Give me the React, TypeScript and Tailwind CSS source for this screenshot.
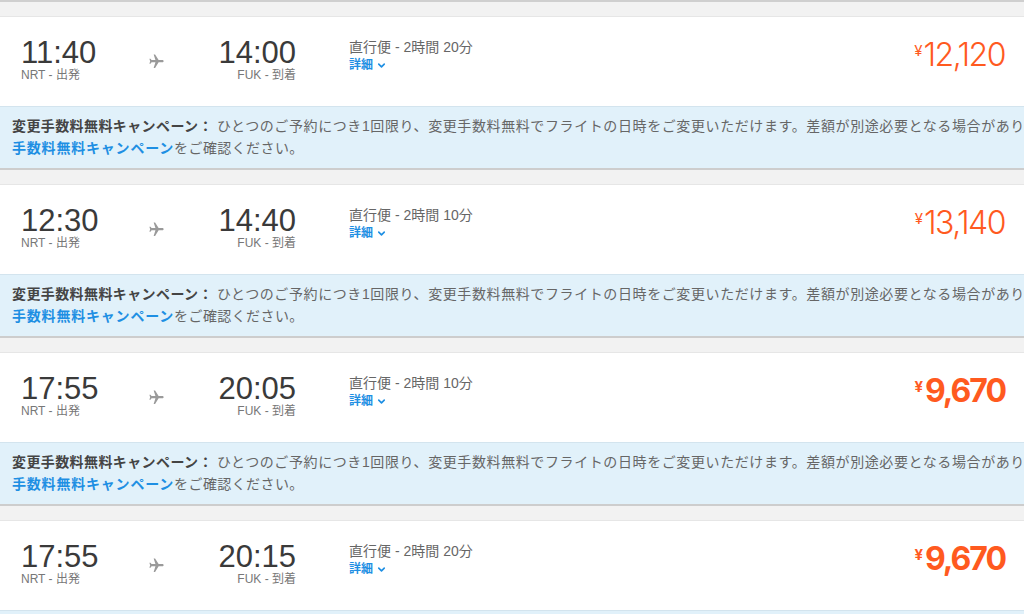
import { ChevronDown } from "lucide-react";

type Flight = {
	dep: string;
	arr: string;
	duration: string;
	price: string;
	cheap?: boolean;
};

const flights: Flight[] = [
	{ dep: "11:40", arr: "14:00", duration: "2時間 20分", price: "12,120" },
	{ dep: "12:30", arr: "14:40", duration: "2時間 10分", price: "13,140" },
	{ dep: "17:55", arr: "20:05", duration: "2時間 10分", price: "9,670", cheap: true },
	{ dep: "17:55", arr: "20:15", duration: "2時間 20分", price: "9,670", cheap: true },
];

function PlaneIcon() {
	return (
		<svg width="17" height="17" viewBox="0 0 24 24" className="rotate-90 fill-[#9a9a9a]">
			<path d="M21 16v-2l-8-5V3.5c0-.83-.67-1.5-1.5-1.5S10 2.67 10 3.5V9l-8 5v2l8-2.5V19l-2 1.5V22l3.5-1 3.5 1v-1.5L13 19v-5.5l8 2.5z" />
		</svg>
	);
}

function FlightCard({ flight }: { flight: Flight }) {
	return (
		<div className="border-t border-[#e6e6e6]">
			{/* Main row */}
			<div className="h-[89px] bg-white flex items-start pl-[21px] pr-[19px]">
				<div className="w-[110px] pt-[21px]">
					<p className="text-[31px] leading-[30px] text-[#3a3a3a]">{flight.dep}</p>
					<p className="text-[12px] leading-[14px] text-[#777777]">NRT - 出発</p>
				</div>
				<div className="w-[50px] flex justify-center pt-[36px]">
					<PlaneIcon />
				</div>
				<div className="w-[115px] pt-[21px] text-right">
					<p className="text-[31px] leading-[30px] text-[#3a3a3a]">{flight.arr}</p>
					<p className="text-[12px] leading-[14px] text-[#777777]">FUK - 到着</p>
				</div>
				<div className="ml-[53px] pt-[20px]">
					<p className="text-[14px] leading-[20px] text-[#666666]">
						直行便 - {flight.duration}
					</p>
					<button className="flex items-center gap-[3px] text-[12px] leading-[16px] font-bold text-[#1e8fe3]">
						詳細
						<ChevronDown className="w-[11px] h-[11px]" strokeWidth={3.5} />
					</button>
				</div>
				<div className="flex-1" />
				<div className="pt-[20px] flex items-start text-[#ff5a1f] font-['Inter',sans-serif]">
					<span
						className={
							flight.cheap
								? "text-[15px] leading-[15px] mt-[6px] mr-[2px] font-bold"
								: "text-[15px] leading-[15px] mt-[6px] mr-[1px] font-normal"
						}
					>
						¥
					</span>
					<span
						className={
							flight.cheap
								? "text-[32px] leading-[36px] font-bold tracking-[-2px]"
								: "text-[32px] leading-[36px] font-light tracking-[-1.5px]"
						}
					>
						{flight.price}
					</span>
				</div>
			</div>

			{/* Campaign notice */}
			<div className="h-[64px] bg-[#e1f1fa] border-t border-[#d3e4ee] border-b-2 border-b-[#cdcdcd] pl-[12px] pt-[8px] overflow-hidden text-[14px] leading-[22px] tracking-[0.4px] text-[#666666]">
				<p className="whitespace-nowrap">
					<span className="font-bold text-[#444444]">変更手数料無料キャンペーン：</span>
					<span className="ml-[4px] tracking-[0.6px]">
						ひとつのご予約につき1回限り、変更手数料無料でフライトの日時をご変更いただけます。差額が別途必要となる場合があります。詳しくは
					</span>
					<span className="font-bold text-[#1e8fe3]">変更</span>
				</p>
				<p className="whitespace-nowrap">
					<span className="font-bold text-[#1e8fe3] tracking-[0.8px]">手数料無料キャンペーン</span>
					をご確認ください。
				</p>
			</div>
		</div>
	);
}

export default function App() {
	return (
		<div className="w-full h-[614px] overflow-hidden bg-[#f2f2f2] font-['Liberation_Sans','Noto_Sans_CJK_JP',sans-serif]">
			<div className="h-[2px] bg-[#cfcfcf]" />
			<div className="flex flex-col gap-[14px] pt-[14px]">
				{flights.map((f, i) => (
					<FlightCard key={i} flight={f} />
				))}
			</div>
		</div>
	);
}
